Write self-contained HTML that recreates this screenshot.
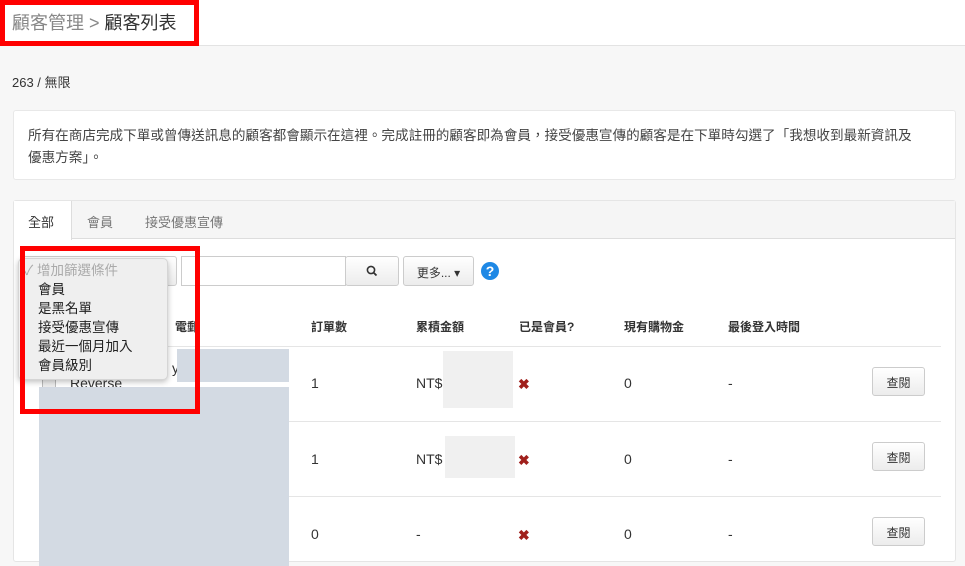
<!DOCTYPE html>
<html><head><meta charset="utf-8"><style>
*{box-sizing:border-box;margin:0;padding:0}
body{width:965px;height:566px;overflow:hidden;background:#f7f7f7;font-family:"Liberation Sans","Noto Sans CJK TC",sans-serif;color:#333;position:relative;font-size:13px}
.a{position:absolute}
.hdr{left:0;top:0;width:965px;height:46px;background:#fff;border-bottom:1px solid #e3e3e3}
.btn{background:linear-gradient(#fff,#ececec);border:1px solid #ccc;border-radius:3px;text-align:center;font-size:12px;color:#333}
.th{top:318px;font-size:12px;font-weight:bold;color:#333}
.line{left:39px;width:902px;height:1px;background:#e5e5e5}
.x{color:#a0201c;font-size:14px;font-weight:bold}
.red{border:5px solid #f00}
</style></head><body>
<div class="a hdr"></div>
<div class="a" style="left:12px;top:9px;font-size:18px;color:#888">顧客管理 &gt; <span style="color:#333">顧客列表</span></div>
<div class="a red" style="left:0;top:0;width:199px;height:46px"></div>
<div class="a" style="left:12px;top:72px;font-size:13px">263 / 無限</div>
<div class="a" style="left:13px;top:110px;width:943px;height:70px;background:#fff;border:1px solid #e8e8e8;border-radius:3px"></div>
<div class="a" style="left:28px;top:125px;width:920px;font-size:13.6px;line-height:22px;color:#444;white-space:nowrap">所有在商店完成下單或曾傳送訊息的顧客都會顯示在這裡。完成註冊的顧客即為會員，接受優惠宣傳的顧客是在下單時勾選了「我想收到最新資訊及<br>優惠方案」。</div>
<div class="a" style="left:13px;top:200px;width:943px;height:362px;background:#fff;border:1px solid #e5e5e5;border-radius:3px"></div>
<div class="a" style="left:14px;top:201px;width:941px;height:38px;background:#f5f5f5;border-bottom:1px solid #ddd"></div>
<div class="a" style="left:14px;top:201px;width:58px;height:39px;background:#fff;border-right:1px solid #ddd"></div>
<div class="a" style="left:28px;top:212px;font-size:13px;color:#333">全部</div>
<div class="a" style="left:87px;top:212px;font-size:13px;color:#777">會員</div>
<div class="a" style="left:145px;top:212px;font-size:13px;color:#777">接受優惠宣傳</div>
<div class="a btn" style="left:22px;top:256px;width:155px;height:30px;text-align:right;padding:6px 6px 0 0;color:#555">⇕</div>
<div class="a" style="left:181px;top:256px;width:165px;height:30px;background:#fff;border:1px solid #ccc"></div>
<div class="a btn" style="left:345px;top:256px;width:54px;height:30px;padding-top:8px">
<svg width="12" height="12" viewBox="0 0 12 12"><circle cx="5" cy="5" r="3.6" fill="none" stroke="#333" stroke-width="1.6"/><path d="M7.6 7.6L10.5 10.5" stroke="#333" stroke-width="1.8"/></svg></div>
<div class="a btn" style="left:403px;top:256px;width:71px;height:30px;padding-top:7px">更多... ▾</div>
<div class="a" style="left:481px;top:262px;width:18px;height:18px;border-radius:50%;background:#1e88e5;color:#fff;font-weight:bold;font-size:14px;text-align:center;line-height:18px">?</div>
<div class="a th" style="left:175px">電郵</div>
<div class="a th" style="left:311px">訂單數</div>
<div class="a th" style="left:416px">累積金額</div>
<div class="a th" style="left:519px">已是會員?</div>
<div class="a th" style="left:624px">現有購物金</div>
<div class="a th" style="left:728px">最後登入時間</div>
<div class="a line" style="top:346px"></div>
<div class="a line" style="top:421px"></div>
<div class="a line" style="top:496px"></div>
<div class="a" style="left:42px;top:376px;width:14px;height:14px;border:1px solid #bbb;background:#eee"></div>
<div class="a" style="left:70px;top:375px;font-size:14px">Reverse</div>
<div class="a" style="left:172px;top:360px;font-size:14px">y</div>
<div class="a" style="left:177px;top:349px;width:112px;height:33px;background:#d3dae3"></div>
<div class="a" style="left:39px;top:387px;width:250px;height:179px;background:#d3dae3"></div>
<div class="a" style="left:443px;top:351px;width:70px;height:57px;background:#f0f0f0"></div>
<div class="a" style="left:445px;top:436px;width:70px;height:42px;background:#f0f0f0"></div>
<div class="a" style="left:311px;top:375px;font-size:14px">1</div>
<div class="a" style="left:416px;top:375px;font-size:14px">NT$</div>
<div class="a x" style="left:518px;top:376px">✖</div>
<div class="a" style="left:624px;top:375px;font-size:14px">0</div>
<div class="a" style="left:728px;top:375px;font-size:14px">-</div>
<div class="a btn" style="left:872px;top:367px;width:53px;height:29px;padding-top:6px">查閱</div>
<div class="a" style="left:311px;top:451px;font-size:14px">1</div>
<div class="a" style="left:416px;top:451px;font-size:14px">NT$</div>
<div class="a x" style="left:518px;top:452px">✖</div>
<div class="a" style="left:624px;top:451px;font-size:14px">0</div>
<div class="a" style="left:728px;top:451px;font-size:14px">-</div>
<div class="a btn" style="left:872px;top:442px;width:53px;height:29px;padding-top:6px">查閱</div>
<div class="a" style="left:311px;top:526px;font-size:14px">0</div>
<div class="a" style="left:416px;top:526px;font-size:14px">-</div>
<div class="a x" style="left:518px;top:527px">✖</div>
<div class="a" style="left:624px;top:526px;font-size:14px">0</div>
<div class="a" style="left:728px;top:526px;font-size:14px">-</div>
<div class="a btn" style="left:872px;top:517px;width:53px;height:29px;padding-top:6px">查閱</div>
<div class="a" style="left:18px;top:258px;width:150px;height:122px;background:#efefef;border:1px solid #d5d5d5;border-radius:5px;box-shadow:0 2px 6px rgba(0,0,0,.25);padding:2px 0 0 5px;font-size:13.5px;line-height:19px;color:#222">
<div style="color:#aaa">✓ 增加篩選條件</div>
<div style="padding-left:14px">會員</div>
<div style="padding-left:14px">是黑名單</div>
<div style="padding-left:14px">接受優惠宣傳</div>
<div style="padding-left:14px">最近一個月加入</div>
<div style="padding-left:14px">會員級別</div>
</div>
<div class="a red" style="left:20px;top:246px;width:180px;height:168px"></div>
</body></html>
